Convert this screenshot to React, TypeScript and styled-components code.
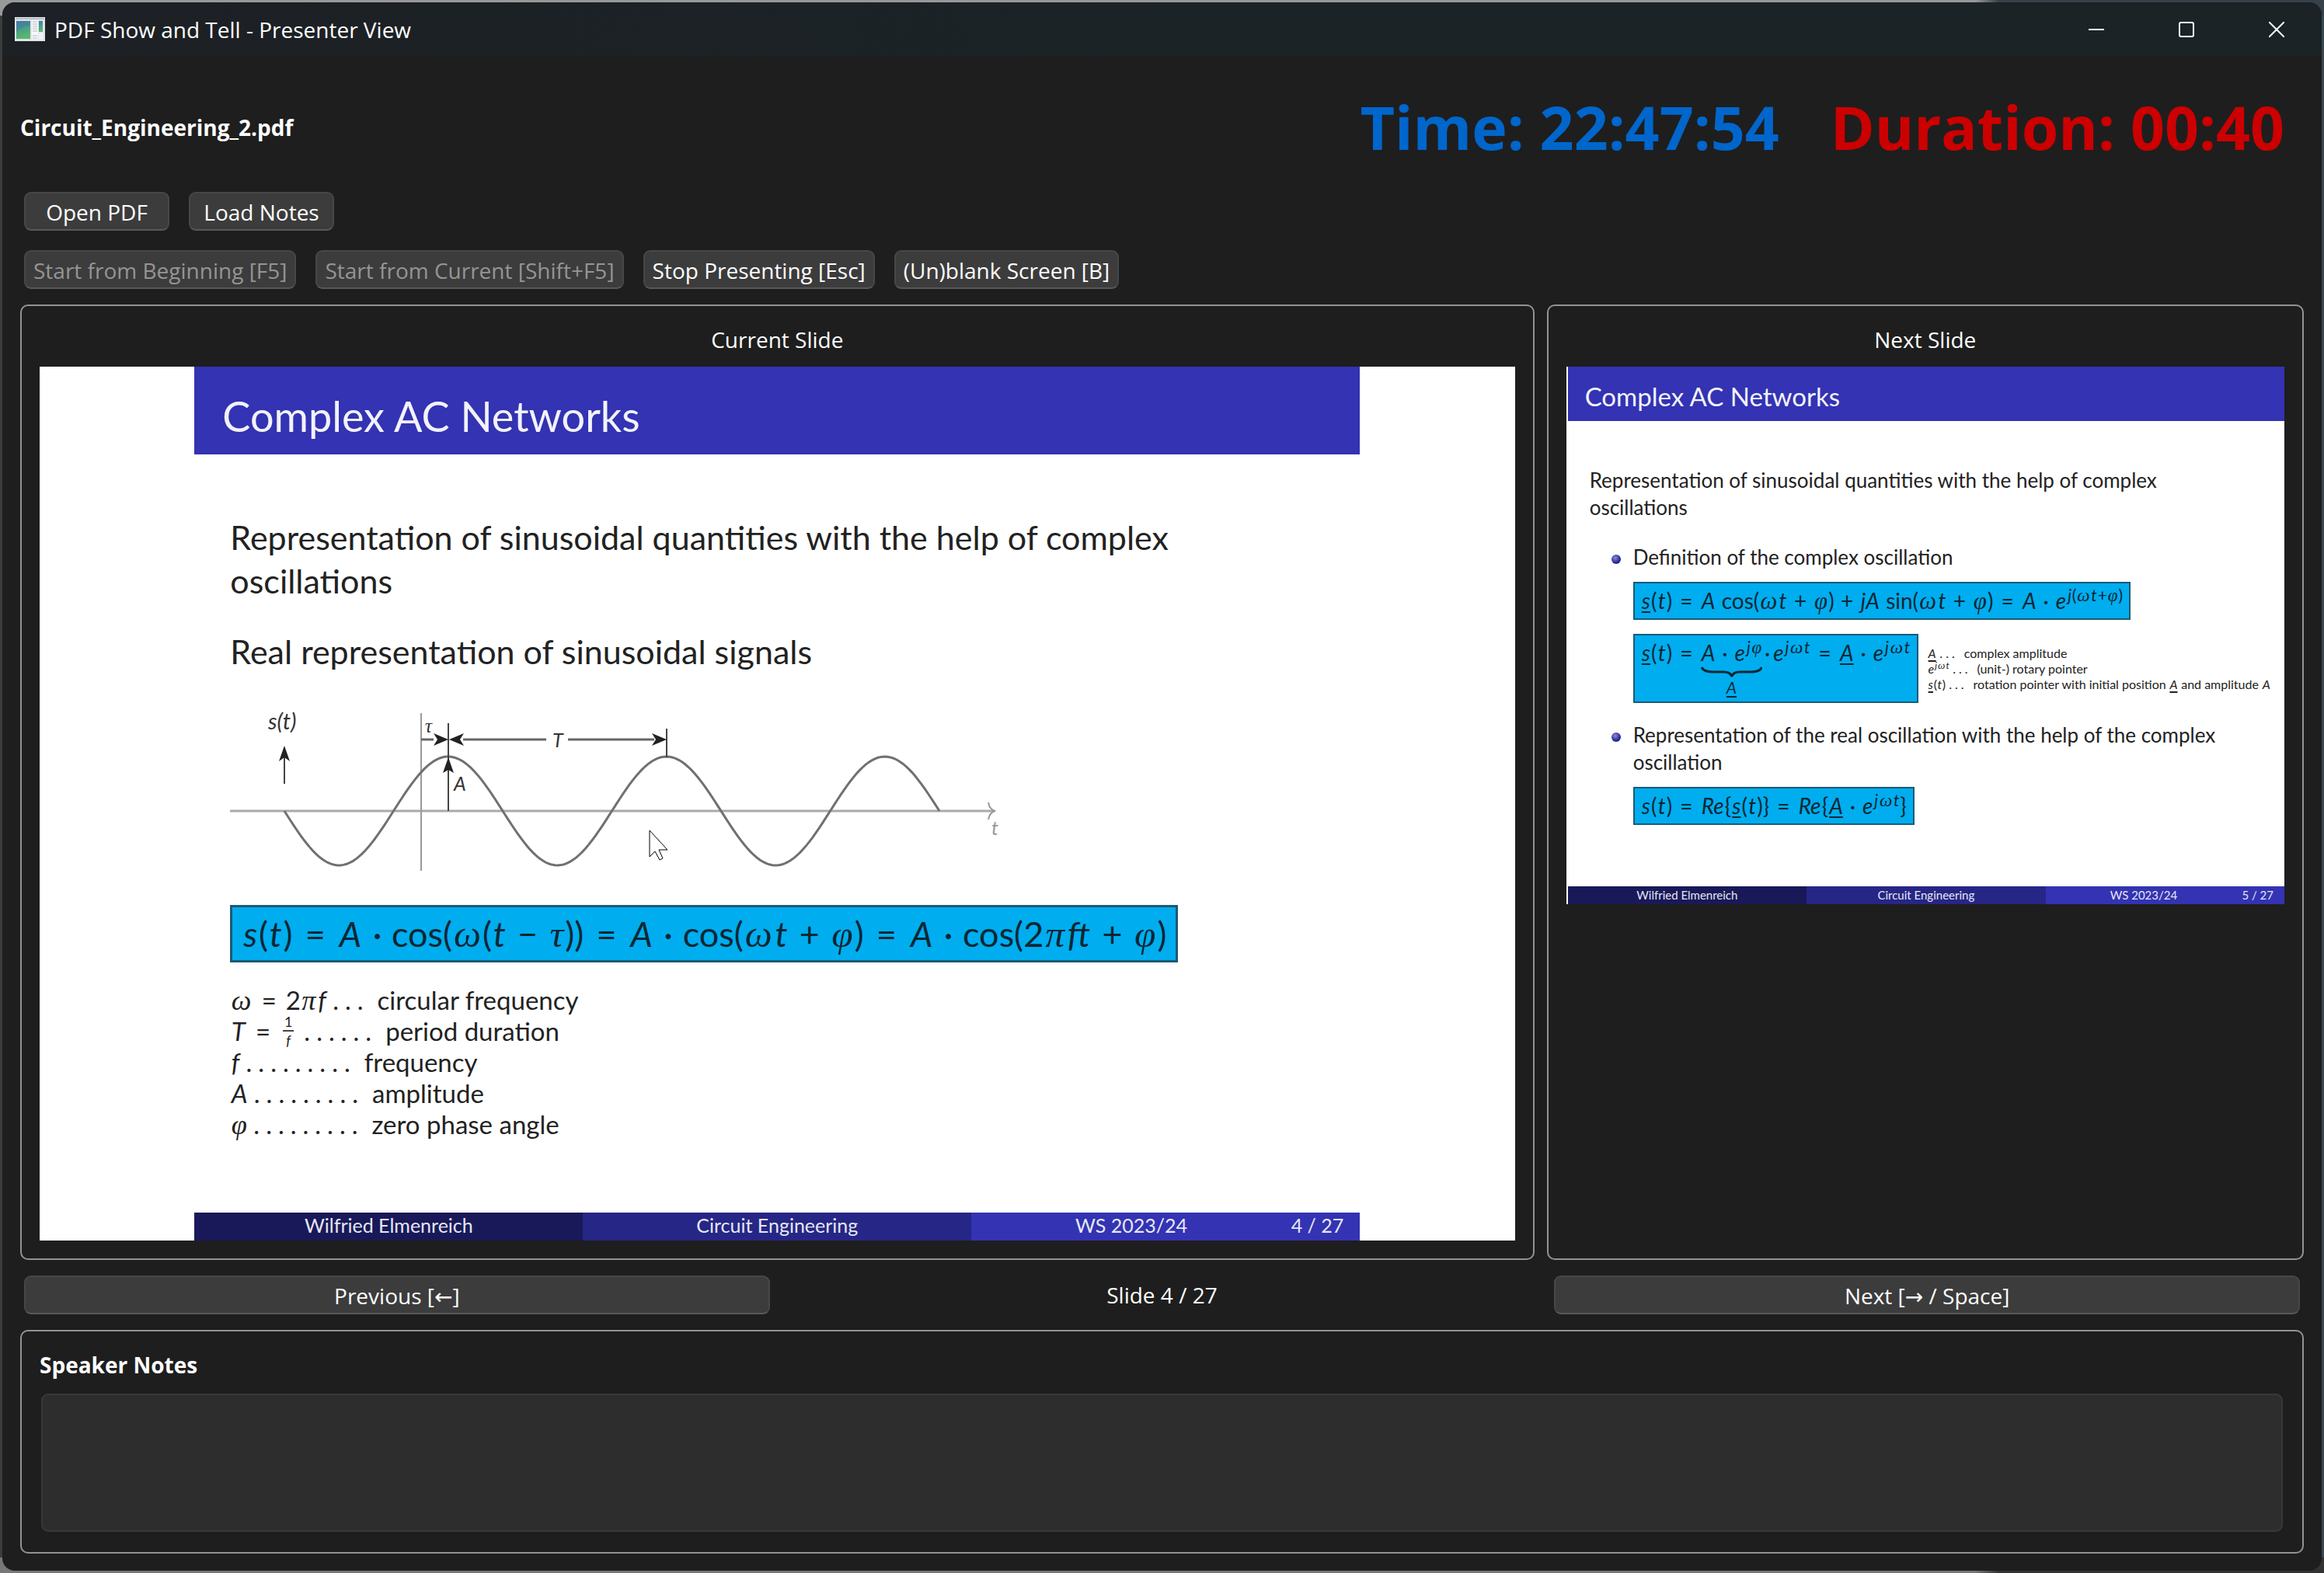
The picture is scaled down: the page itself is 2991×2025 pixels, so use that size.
import React from "react";
import styled, { createGlobalStyle } from "styled-components";

const uiFont = '"Open Sans", "Noto Sans", sans-serif';
const slideFont = 'Lato, "Open Sans", sans-serif';

const GlobalStyle = createGlobalStyle`
  *, *::before, *::after { box-sizing: border-box; }
  body { margin: 0; background: #3a3c3e; }
  p, ul, h1, h2, h3 { margin: 0; padding: 0; }
`;

/* ---------- window ---------- */

const Desktop = styled.div`
  min-height: 100vh;
  display: flex;
  padding: 3px;
  background:
    linear-gradient(to right, #999999 85%, #36414a 86%) top / 100% 20px no-repeat,
    linear-gradient(to right, #777777 85%, #333333 86%) bottom / 100% 20px no-repeat,
    linear-gradient(to right, #3c3c3c 50%, #39474f 51%);
`;

const Window = styled.div`
  flex: 1;
  min-width: 0;
  display: flex;
  flex-direction: column;
  overflow: hidden;
  border-radius: 16px;
  background: #1e1e1e;
  color: #ffffff;
  font: 400 28px/38px ${uiFont};
`;

const TitleBar = styled.header`
  display: flex;
  align-items: center;
  gap: 12px;
  height: 69px;
  padding-left: 16px;
  background: linear-gradient(to right, #1d2024, #1b2326 50%);
`;

const WindowTitle = styled.h1`
  flex: 1;
  font: inherit;
`;

const WindowControls = styled.div`
  display: flex;
  align-self: stretch;
`;

const WindowControl = styled.button`
  display: flex;
  align-items: center;
  justify-content: center;
  width: 116px;
  padding: 0;
  border: 0;
  background: transparent;
  color: #ffffff;
`;

const Content = styled.main`
  flex: 1;
  display: flex;
  flex-direction: column;
  gap: 20px;
  padding: 39px 23px 22px;
`;

/* ---------- top area ---------- */

const StatusRow = styled.div`
  display: flex;
  align-items: center;
  justify-content: space-between;
  padding-right: 25px;
  margin-bottom: 11px;
`;

const FileName = styled.h2`
  font: inherit;
  font-weight: 700;
`;

const Clocks = styled.div`
  display: flex;
  gap: 66px;
`;

const Clock = styled.span<{ $color: string }>`
  color: ${(p) => p.$color};
  font-size: 77px;
  font-weight: 700;
  line-height: 105px;
`;

const Toolbars = styled.div`
  display: flex;
  flex-direction: column;
  gap: 25px;
  padding: 0 5px;
`;

const Toolbar = styled.div`
  display: flex;
  gap: 25px;
`;

const Button = styled.button`
  height: 50px;
  min-width: 187px;
  padding: 2px 10px 0;
  border: 2px solid #474747;
  border-bottom-color: #585858;
  border-radius: 9px;
  background: #3c3c3c;
  color: #ffffff;
  font: inherit;
  white-space: nowrap;

  &:disabled {
    color: #959595;
  }
`;

const Arrow = styled.span`
  font-family: "DejaVu Sans", sans-serif;
  line-height: 1;
`;

/* ---------- panels ---------- */

const Panels = styled.div`
  flex: 1;
  display: grid;
  grid-template-columns: 2fr 1fr;
  gap: 16px;
`;

const Panel = styled.section`
  display: flex;
  flex-direction: column;
  gap: 16px;
  min-width: 0;
  padding: 24px 23px 23px;
  border: 2px solid #939393;
  border-radius: 10px;
`;

const PanelTitle = styled.h2`
  font: inherit;
  text-align: center;
`;

const Stage = styled.div<{ $edge?: boolean }>`
  display: flex;
  justify-content: center;
  padding-left: ${(p) => (p.$edge ? "2px" : "0")};
  background: #ffffff;
`;

const Navigation = styled.nav`
  display: grid;
  grid-template-columns: repeat(3, 1fr);
  align-items: center;
  gap: 25px;
  padding: 0 5px;
  text-align: center;
`;

const NotesPanel = styled(Panel)`
  gap: 18px;
  padding-bottom: 26px;
`;

const NotesLabel = styled.label`
  font-weight: 700;
`;

const NotesBox = styled.textarea`
  display: block;
  height: 178px;
  margin: 0 2px;
  padding: 12px;
  border: 2px solid #383838;
  border-radius: 9px;
  background: #2d2d2d;
  color: #ffffff;
  font: inherit;
  resize: none;
`;

/* ---------- slides ---------- */

type Scale = { $small?: boolean };

const Slide = styled.article<{ $width: string }>`
  position: relative;
  display: flex;
  flex-direction: column;
  width: ${(p) => p.$width};
  aspect-ratio: 4 / 3;
  background: #ffffff;
  color: #222222;
  font-family: ${slideFont};
`;

const SlideHeader = styled.header<Scale>`
  display: flex;
  align-items: center;
  height: ${(p) => (p.$small ? "70px" : "113px")};
  padding: ${(p) => (p.$small ? "7px 22px 0" : "14px 36px 0")};
  background: #3333b3;
  color: #f2f2fa;
`;

const SlideTitle = styled.h3<Scale>`
  font-weight: 400;
  font-size: ${(p) => (p.$small ? "33px" : "54px")};
  line-height: 1;
`;

const SlideBody = styled.div<Scale>`
  flex: 1;
  padding: ${(p) => (p.$small ? "59px 0 0 28px" : "79px 0 0 46px")};
  font-size: ${(p) => (p.$small ? "26px" : "43px")};
  line-height: ${(p) => (p.$small ? "35px" : "56px")};
`;

const Paragraph = styled.p`
  max-width: 95%;

  & + & {
    margin-top: 35px;
  }
`;

const SlideFooter = styled.footer<Scale>`
  display: grid;
  grid-template-columns: repeat(3, 1fr);
  height: ${(p) => (p.$small ? "23px" : "36px")};
  color: #e6e6f2;
  font-size: ${(p) => (p.$small ? "15px" : "25px")};
  line-height: ${(p) => (p.$small ? "22px" : "32px")};
  text-align: center;
`;

const FooterCell = styled.span<{ $bg: string }>`
  background: ${(p) => p.$bg};
`;

const FooterEnd = styled.span<Scale>`
  display: grid;
  grid-template-columns: 1fr auto 1fr auto;
  padding-right: ${(p) => (p.$small ? "14px" : "21px")};
  background: #3333b3;

  & > :first-child {
    grid-column: 2;
  }

  & > :last-child {
    grid-column: 4;
  }
`;

/* ---------- maths ---------- */

const Formula = styled.div<Scale>`
  width: fit-content;
  padding: ${(p) => (p.$small ? "5px 8px" : "6px 12px")};
  border: ${(p) => (p.$small ? "2px" : "3px")} solid #1c5a74;
  background: #00adef;
  color: #0b2733;
  font-size: ${(p) => (p.$small ? "28px" : "45px")};
  white-space: nowrap;
`;

const Var = styled.i`
  margin: 0 0.04em;
  font-style: italic;
`;

const Greek = styled.i`
  margin: 0 0.04em;
  font-family: "Liberation Serif", serif;
  font-size: 1.1em;
  line-height: 0;
`;

const Bar = styled.i`
  margin: 0 0.04em;
  text-decoration: underline;
  text-decoration-thickness: 2px;
  text-underline-offset: 3px;
`;

const Op = styled.span<{ $gap: string }>`
  margin: 0 ${(p) => p.$gap};
`;

const Sup = styled.sup`
  font-size: 0.75em;
  line-height: 0;
  vertical-align: 0.5em;
`;

const Eq = () => <Op $gap="0.36em">=</Op>;
const Plus = () => <Op $gap="0.3em">+</Op>;
const Dot = () => <Op $gap="0.28em">·</Op>;

const Brace = styled.span`
  display: inline-flex;
  flex-direction: column;
  align-items: center;
`;

const BraceShape = styled.svg`
  display: block;
  width: 100%;
  height: 14px;
`;

const BraceLabel = styled.span`
  font-size: 21px;
  line-height: 26px;
`;

const Chart = styled.svg`
  display: block;
  width: 1000px;
  height: 220px;
  margin: 42px 0 36px;
  font-family: ${slideFont};
  font-style: italic;
`;

const Legend = styled.ul`
  margin-top: 28px;
  list-style: none;
  font-size: 33px;
  line-height: 40px;
`;

const LegendRow = styled.li`
  display: flex;
  align-items: baseline;
  height: 40px;
`;

const Leader = styled.span<Scale>`
  display: inline-flex;
  gap: ${(p) => (p.$small ? "4px" : "8px")};
  margin: ${(p) => (p.$small ? "0 12px 0 4px" : "0 18px 0 7px")};
`;

const Fraction = styled.span`
  display: inline-flex;
  flex-direction: column;
  align-items: center;
  align-self: center;
  margin: 0 6px 0 4px;
  font-size: 18px;
  line-height: 22px;
`;

const Numerator = styled.span`
  padding: 0 2px;
  border-bottom: 2px solid #444444;
`;

const Bullets = styled.ul`
  display: flex;
  flex-direction: column;
  gap: 24px;
  margin: 29px 0 0 28px;
  list-style: none;
`;

const Bullet = styled.li`
  display: flex;
  gap: 16px;

  &::before {
    content: "";
    flex: none;
    width: 12px;
    height: 12px;
    margin-top: 14px;
    border-radius: 50%;
    background: radial-gradient(circle at 40% 35%, #8c8cd8, #26268f 60%);
  }
`;

const BulletBody = styled.div`
  display: flex;
  flex-direction: column;
  align-items: flex-start;
  gap: 14px;
`;

const DefinitionRow = styled.div`
  display: flex;
  align-items: center;
  gap: 12px;
  margin-top: 4px;
`;

const SideNotes = styled.div`
  font-size: 16px;
  line-height: 20px;
  white-space: nowrap;
`;

const Cursor = styled.svg`
  position: absolute;
  left: 39%;
  top: 53%;
  width: 25px;
  height: 40px;
`;

function Dots({ count, small }: { count: number; small?: boolean }) {
  return (
    <Leader $small={small}>
      {Array.from({ length: count }, (_, i) => (
        <span key={i}>.</span>
      ))}
    </Leader>
  );
}

function AppIcon() {
  return (
    <svg width="39" height="31" viewBox="0 0 39 31" aria-hidden="true">
      <defs>
        <linearGradient id="screen" x1="0" y1="0" x2="0.3" y2="1">
          <stop offset="0" stopColor="#3f7fa6" />
          <stop offset="1" stopColor="#57b96c" />
        </linearGradient>
      </defs>
      <rect width="39" height="31" fill="#dfe3ea" />
      <rect x="1" y="1" width="37" height="2" fill="#b9bfc9" />
      <rect x="2" y="5" width="18" height="23" fill="url(#screen)" />
      <path d="M2 19 C7 13 13 11 20 11 V5 H2 Z" fill="#3f7a9c" opacity="0.5" />
      <rect x="22" y="4" width="8" height="25" fill="#f7f8fa" />
      <path d="M23 6H29M23 9H29M23 12H29M23 15H29M23 18H29M23 24H29M23 27H29" stroke="#b4b8be" />
      <rect x="31" y="5" width="5" height="14" fill="url(#screen)" />
      <rect x="31" y="20" width="6" height="9" fill="#f0f2f6" />
    </svg>
  );
}

const PERIOD = 281;
const AMPLITUDE = 70;
const wave = Array.from({ length: 212 }, (_, i) => {
  const x = Math.min(i * 4, PERIOD * 3);
  const y = 135 + AMPLITUDE * Math.sin((2 * Math.PI * x) / PERIOD);
  return `${i ? "L" : "M"}${70 + x} ${y.toFixed(1)}`;
}).join(" ");

function SineChart() {
  return (
    <Chart viewBox="0 0 1000 220" role="img" aria-label="Sinusoidal signal">
      <g fill="none" stroke="#9a9a9a" strokeWidth="2">
        <path d="M0 135H983" strokeWidth="3" stroke="#aaaaaa" />
        <path d="M246 9V212" />
        <path d="M976 124C977 130 980 134 985 135C980 136 977 140 976 146" />
      </g>
      <path d={wave} fill="none" stroke="#707070" strokeWidth="3" />
      <g fill="none" stroke="#444444" strokeWidth="2">
        <path d="M70 100V60M281 22V135M562 29V66" />
        <path d="M246 43H262M300 43H407M435 43H546" strokeWidth="3" stroke="#666666" />
      </g>
      <g fill="#222222">
        <path d="M70 51L77 71L70 66L63 71Z" />
        <path d="M281 66L288 86L281 82L274 86Z" />
        <path d="M281 43L262 51L267 43L262 35Z" />
        <path d="M282 43L301 51L296 43L301 35Z" />
        <path d="M562 43L543 51L548 43L543 35Z" />
      </g>
      <g fill="#333333" fontSize="25">
        <text x="49" y="30" fontSize="29">s(t)</text>
        <text x="415" y="53">T</text>
        <text x="288" y="109">A</text>
        <text x="251" y="34" fontFamily="Liberation Serif, serif">τ</text>
        <text x="980" y="166" fill="#999999">t</text>
      </g>
    </Chart>
  );
}

const Sig = () => (
  <>
    <Var>s</Var>(<Var>t</Var>)
  </>
);
const BarSig = () => (
  <>
    <Bar>s</Bar>(<Var>t</Var>)
  </>
);
const PhaseArg = () => (
  <>
    (<Greek>ω</Greek>
    <Var>t</Var>
    <Plus />
    <Greek>φ</Greek>)
  </>
);
const Rotary = () => (
  <>
    <Var>e</Var>
    <Sup>
      <Var>j</Var>
      <Greek>ω</Greek>
      <Var>t</Var>
    </Sup>
  </>
);

function Footer({ page, small }: { page: number; small?: boolean }) {
  return (
    <SlideFooter $small={small}>
      <FooterCell $bg="#191959">Wilfried Elmenreich</FooterCell>
      <FooterCell $bg="#262686">Circuit Engineering</FooterCell>
      <FooterEnd $small={small}>
        <span>WS 2023/24</span>
        <span>{page} / 27</span>
      </FooterEnd>
    </SlideFooter>
  );
}

function CurrentSlide() {
  return (
    <Slide $width="79%">
      <SlideHeader>
        <SlideTitle>Complex AC Networks</SlideTitle>
      </SlideHeader>
      <SlideBody>
        <Paragraph>
          Representation of sinusoidal quantities with the help of complex
          <br />
          oscillations
        </Paragraph>
        <Paragraph>Real representation of sinusoidal signals</Paragraph>
        <SineChart />
        <Formula>
          <Sig />
          <Eq />
          <Var>A</Var>
          <Dot />
          cos(<Greek>ω</Greek>(<Var>t</Var>
          <Op $gap="0.3em">−</Op>
          <Greek>τ</Greek>))
          <Eq />
          <Var>A</Var>
          <Dot />
          cos
          <PhaseArg />
          <Eq />
          <Var>A</Var>
          <Dot />
          cos(2<Greek>π</Greek>
          <Var>ft</Var>
          <Plus />
          <Greek>φ</Greek>)
        </Formula>
        <Legend>
          <LegendRow>
            <span>
              <Greek>ω</Greek>
              <Eq />2<Greek>π</Greek>
              <Var>f</Var>
            </span>
            <Dots count={3} />
            circular frequency
          </LegendRow>
          <LegendRow>
            <span>
              <Var>T</Var>
              <Eq />
            </span>
            <Fraction>
              <Numerator>1</Numerator>
              <Var>f</Var>
            </Fraction>
            <Dots count={6} />
            period duration
          </LegendRow>
          <LegendRow>
            <Var>f</Var>
            <Dots count={9} />
            frequency
          </LegendRow>
          <LegendRow>
            <Var>A</Var>
            <Dots count={9} />
            amplitude
          </LegendRow>
          <LegendRow>
            <Greek>φ</Greek>
            <Dots count={9} />
            zero phase angle
          </LegendRow>
        </Legend>
      </SlideBody>
      <Footer page={4} />
      <Cursor viewBox="0 0 25 40" aria-hidden="true">
        <path
          d="M1 1V35L8 28L14 39L18 37L13 26H24Z"
          fill="#ffffff"
          stroke="#000000"
          strokeWidth="1"
        />
      </Cursor>
    </Slide>
  );
}

function NextSlide() {
  return (
    <Slide $width="100%">
      <SlideHeader $small>
        <SlideTitle $small>Complex AC Networks</SlideTitle>
      </SlideHeader>
      <SlideBody $small>
        <Paragraph>
          Representation of sinusoidal quantities with the help of complex
          <br />
          oscillations
        </Paragraph>
        <Bullets>
          <Bullet>
            <BulletBody>
              <p>Definition of the complex oscillation</p>
              <Formula $small>
                <BarSig />
                <Eq />
                <Var>A</Var> cos
                <PhaseArg />
                <Plus />
                <Var>jA</Var> sin
                <PhaseArg />
                <Eq />
                <Var>A</Var>
                <Dot />
                <Var>e</Var>
                <Sup>
                  <Var>j</Var>(<Greek>ω</Greek>
                  <Var>t</Var>+<Greek>φ</Greek>)
                </Sup>
              </Formula>
              <DefinitionRow>
                <Formula $small>
                  <BarSig />
                  <Eq />
                  <Brace>
                    <span>
                      <Var>A</Var>
                      <Dot />
                      <Var>e</Var>
                      <Sup>
                        <Var>j</Var>
                        <Greek>φ</Greek>
                      </Sup>
                    </span>
                    <BraceShape viewBox="0 0 76 14" preserveAspectRatio="none" aria-hidden="true">
                      <path
                        d="M1 1C3 6 8 7 16 7H28C34 7 37 9 38 13C39 9 42 7 48 7H60C68 7 73 6 75 1"
                        fill="none"
                        stroke="#0b2733"
                        strokeWidth="3"
                      />
                    </BraceShape>
                    <BraceLabel>
                      <Bar>A</Bar>
                    </BraceLabel>
                  </Brace>
                  <Op $gap="0.1em">·</Op>
                  <Rotary />
                  <Eq />
                  <Bar>A</Bar>
                  <Dot />
                  <Rotary />
                </Formula>
                <SideNotes>
                  <p>
                    <Bar>A</Bar>
                    <Dots count={3} small />
                    complex amplitude
                  </p>
                  <p>
                    <Rotary />
                    <Dots count={3} small />
                    (unit-) rotary pointer
                  </p>
                  <p>
                    <BarSig />
                    <Dots count={3} small />
                    rotation pointer with initial position <Bar>A</Bar> and amplitude <Var>A</Var>
                  </p>
                </SideNotes>
              </DefinitionRow>
            </BulletBody>
          </Bullet>
          <Bullet>
            <BulletBody>
              <p>
                Representation of the real oscillation with the help of the complex
                <br />
                oscillation
              </p>
              <Formula $small>
                <Sig />
                <Eq />
                <Var>Re</Var>
                {"{"}
                <BarSig />
                {"}"}
                <Eq />
                <Var>Re</Var>
                {"{"}
                <Bar>A</Bar>
                <Dot />
                <Rotary />
                {"}"}
              </Formula>
            </BulletBody>
          </Bullet>
        </Bullets>
      </SlideBody>
      <Footer page={5} small />
    </Slide>
  );
}

export default function App() {
  return (
    <Desktop>
      <GlobalStyle />
      <Window>
        <TitleBar>
          <AppIcon />
          <WindowTitle>PDF Show and Tell - Presenter View</WindowTitle>
          <WindowControls>
            <WindowControl aria-label="Minimize">
              <svg width="20" height="20" fill="none" stroke="currentColor" strokeWidth="2">
                <path d="M0 10H20" />
              </svg>
            </WindowControl>
            <WindowControl aria-label="Maximize">
              <svg width="20" height="20" fill="none" stroke="currentColor" strokeWidth="2">
                <rect x="1" y="1" width="18" height="18" rx="2" />
              </svg>
            </WindowControl>
            <WindowControl aria-label="Close">
              <svg width="20" height="20" fill="none" stroke="currentColor" strokeWidth="2">
                <path d="M0 0L20 20M20 0L0 20" />
              </svg>
            </WindowControl>
          </WindowControls>
        </TitleBar>

        <Content>
          <StatusRow>
            <FileName>Circuit_Engineering_2.pdf</FileName>
            <Clocks>
              <Clock $color="#0066cc">Time: 22:47:54</Clock>
              <Clock $color="#cc0000">Duration: 00:40</Clock>
            </Clocks>
          </StatusRow>

          <Toolbars>
            <Toolbar>
              <Button>Open PDF</Button>
              <Button>Load Notes</Button>
            </Toolbar>
            <Toolbar>
              <Button disabled>Start from Beginning [F5]</Button>
              <Button disabled>Start from Current [Shift+F5]</Button>
              <Button>Stop Presenting [Esc]</Button>
              <Button>(Un)blank Screen [B]</Button>
            </Toolbar>
          </Toolbars>

          <Panels>
            <Panel>
              <PanelTitle>Current Slide</PanelTitle>
              <Stage>
                <CurrentSlide />
              </Stage>
            </Panel>
            <Panel>
              <PanelTitle>Next Slide</PanelTitle>
              <Stage $edge>
                <NextSlide />
              </Stage>
            </Panel>
          </Panels>

          <Navigation>
            <Button>
              Previous [<Arrow>←</Arrow>]
            </Button>
            <span>Slide 4 / 27</span>
            <Button>
              Next [<Arrow>→</Arrow> / Space]
            </Button>
          </Navigation>

          <NotesPanel>
            <NotesLabel htmlFor="notes">Speaker Notes</NotesLabel>
            <NotesBox id="notes" />
          </NotesPanel>
        </Content>
      </Window>
    </Desktop>
  );
}
